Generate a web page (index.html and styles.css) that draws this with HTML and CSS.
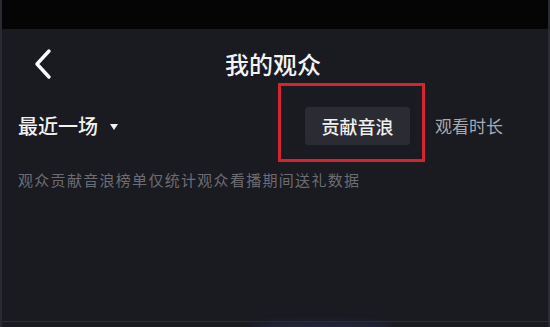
FILE: index.html
```html
<!DOCTYPE html>
<html lang="zh-CN">
<head>
<meta charset="utf-8">
<link rel="stylesheet" href="styles.css">
</head>
<body>
<div class="screen">
  <div class="statusbar"></div>
  <header class="header">
    <svg class="back" width="20" height="32" viewBox="0 0 20 32">
      <polyline points="16,3 4,16 16,29" fill="none" stroke="#ffffff" stroke-width="3.4" stroke-linecap="round" stroke-linejoin="round"/>
    </svg>
    <h1 class="title">我的观众</h1>
  </header>
  <div class="toolbar">
    <div class="filter">最近一场<span class="caret"></span></div>
    <div class="tabs">
      <div class="tab active">贡献音浪</div>
      <div class="tab">观看时长</div>
    </div>
  </div>
  <p class="note">观众贡献音浪榜单仅统计观众看播期间送礼数据</p>
  <div class="highlight"></div>
  <div class="glow"></div>
  <div class="bottomline"></div>
</div>
</body>
</html>
```
FILE: styles.css
```css
* { box-sizing: border-box; }
html, body { margin: 0; padding: 0; }
body {
  background: #1b1a22;
  font-family: "Noto Sans CJK SC", "Noto Sans", sans-serif;
  color: #fff;
}
.screen {
  position: relative;
  width: 550px;
  height: 327px;
  overflow: hidden;
  background: #1a1a21;
  border-left: 2px solid #2a2a32;
  border-right: 2px solid #2a2a32;
}
.statusbar {
  height: 29px;
  background: #050506;
}
.header {
  position: relative;
  height: 70px;
  display: flex;
  align-items: center;
  justify-content: center;
}
.back {
  position: absolute;
  left: 31px;
  top: 19px;
}
.title {
  margin: 0 0 0 -4px;
  font-size: 24px;
  line-height: 30px;
  font-weight: 500;
  color: #f4f4f4;
}
.toolbar {
  height: 54px;
  display: flex;
  align-items: center;
  justify-content: space-between;
  padding: 0 45px 0 16px;
}
.filter {
  display: flex;
  align-items: center;
  font-size: 20px;
  line-height: 24px;
  color: #f2f2f2;
  font-weight: 500;
}
.caret {
  width: 0;
  height: 0;
  margin-left: 12px;
  margin-top: 1px;
  border-left: 4.5px solid transparent;
  border-right: 4.5px solid transparent;
  border-top: 6px solid #f2f2f2;
}
.tabs {
  display: flex;
  align-items: center;
  gap: 25px;
}
.tab {
  font-size: 17px;
  line-height: 22px;
  color: #a8a8b0;
}
.tab.active {
  width: 105px;
  height: 38px;
  display: flex;
  align-items: center;
  justify-content: center;
  background: #2a2b33;
  border-radius: 3px;
  font-size: 18px;
  color: #f0f0f0;
  font-weight: 500;
}
.note {
  margin: 17px 0 0 16px;
  font-size: 15px;
  line-height: 20px;
  letter-spacing: 1.3px;
  color: #6c6c75;
}
.highlight {
  position: absolute;
  left: 276px;
  top: 83px;
  width: 147px;
  height: 79px;
  border: 3px solid #d22530;
}
.glow {
  position: absolute;
  left: 250px;
  top: 321px;
  width: 140px;
  height: 12px;
  border-radius: 50%;
  background: #24253a;
  filter: blur(3px);
}
.bottomline {
  position: absolute;
  left: 0;
  right: 0;
  top: 321px;
  height: 1px;
  background: #2c2c34;
}
```
